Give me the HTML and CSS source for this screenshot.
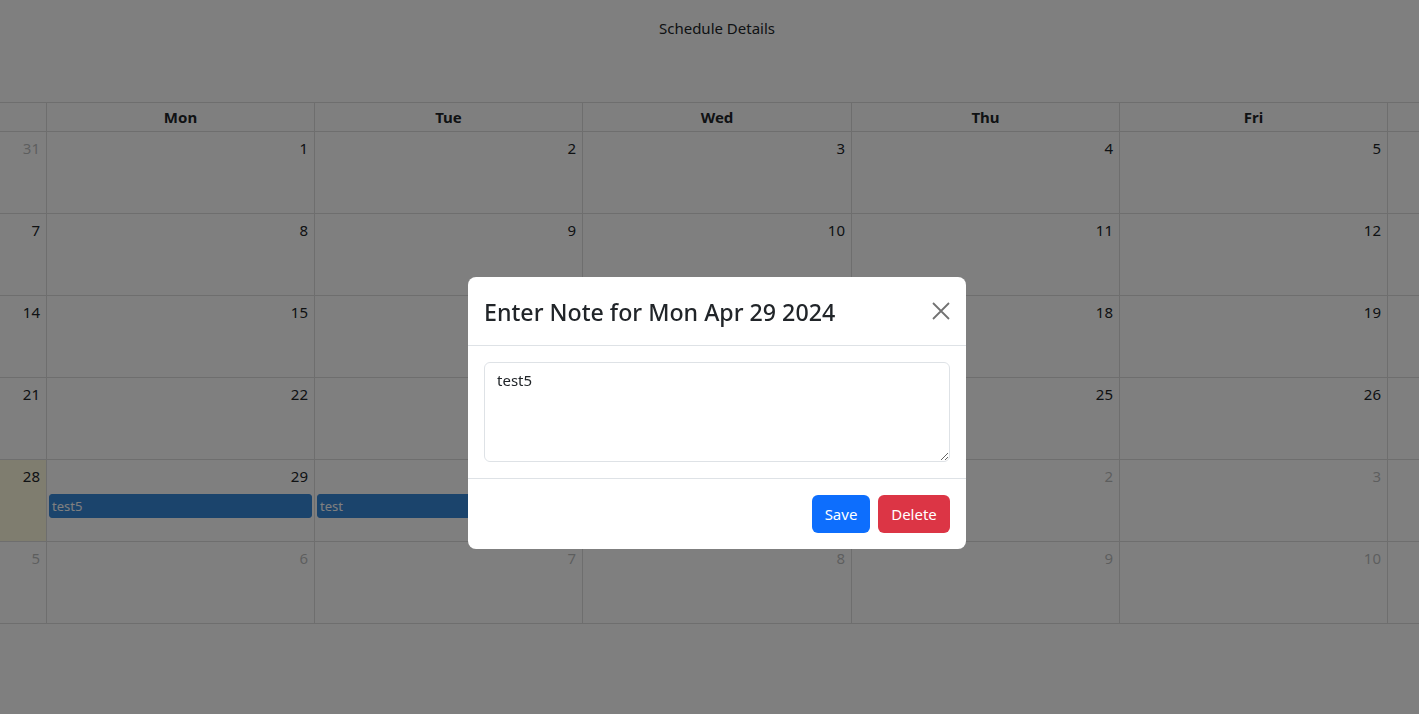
FILE: index.html
```html
<!DOCTYPE html>
<html lang="en">
<head>
<meta charset="utf-8">
<title>Schedule Details</title>
<link rel="stylesheet" href="styles.css">
</head>
<body>
<div class="page">
  <h1 class="page-title">Schedule Details</h1>
  <div class="cal">
    <div class="cal-head">
      <div class="hcell">Sun</div><div class="hcell">Mon</div><div class="hcell">Tue</div><div class="hcell">Wed</div><div class="hcell">Thu</div><div class="hcell">Fri</div><div class="hcell">Sat</div>
    </div>
    <div class="cal-body">
      <div class="day other"><div class="num">31</div></div>
      <div class="day"><div class="num">1</div></div>
      <div class="day"><div class="num">2</div></div>
      <div class="day"><div class="num">3</div></div>
      <div class="day"><div class="num">4</div></div>
      <div class="day"><div class="num">5</div></div>
      <div class="day"><div class="num">6</div></div>

      <div class="day"><div class="num">7</div></div>
      <div class="day"><div class="num">8</div></div>
      <div class="day"><div class="num">9</div></div>
      <div class="day"><div class="num">10</div></div>
      <div class="day"><div class="num">11</div></div>
      <div class="day"><div class="num">12</div></div>
      <div class="day"><div class="num">13</div></div>

      <div class="day"><div class="num">14</div></div>
      <div class="day"><div class="num">15</div></div>
      <div class="day"><div class="num">16</div></div>
      <div class="day"><div class="num">17</div></div>
      <div class="day"><div class="num">18</div></div>
      <div class="day"><div class="num">19</div></div>
      <div class="day"><div class="num">20</div></div>

      <div class="day"><div class="num">21</div></div>
      <div class="day"><div class="num">22</div></div>
      <div class="day"><div class="num">23</div></div>
      <div class="day"><div class="num">24</div></div>
      <div class="day"><div class="num">25</div></div>
      <div class="day"><div class="num">26</div></div>
      <div class="day"><div class="num">27</div></div>

      <div class="day today"><div class="num">28</div></div>
      <div class="day"><div class="num">29</div><div class="event">test5</div></div>
      <div class="day"><div class="num">30</div><div class="event">test</div></div>
      <div class="day other"><div class="num">1</div></div>
      <div class="day other"><div class="num">2</div></div>
      <div class="day other"><div class="num">3</div></div>
      <div class="day other"><div class="num">4</div></div>

      <div class="day other"><div class="num">5</div></div>
      <div class="day other"><div class="num">6</div></div>
      <div class="day other"><div class="num">7</div></div>
      <div class="day other"><div class="num">8</div></div>
      <div class="day other"><div class="num">9</div></div>
      <div class="day other"><div class="num">10</div></div>
      <div class="day other"><div class="num">11</div></div>
    </div>
  </div>
</div>

<div class="backdrop"></div>
<div class="modal-wrap">
  <div class="modal">
    <div class="modal-header">
      <h4 class="modal-title">Enter Note for Mon Apr 29 2024</h4>
      <button class="btn-close" type="button" aria-label="Close">
        <svg width="18" height="18" viewBox="0 0 18 18"><path d="M1 1L17 17M17 1L1 17" stroke="#000" stroke-width="1.8" fill="none"/></svg>
      </button>
    </div>
    <div class="modal-body">
      <textarea class="note">test5</textarea>
    </div>
    <div class="modal-footer">
      <button class="btn btn-primary" type="button">Save</button>
      <button class="btn btn-danger" type="button">Delete</button>
    </div>
  </div>
</div>
</body>
</html>
```

FILE: styles.css
```css
html, body {
  margin: 0;
  padding: 0;
  overflow: hidden;
  background: #fff;
}
body {
  font-family: "Noto Sans", "Open Sans", sans-serif;
  color: #212529;
  font-size: 16px;
}
.page {
  width: 1434px;
}
.page-title {
  margin: 0;
  height: 102px;
  box-sizing: border-box;
  padding-top: 16px;
  font-size: 15px;
  font-weight: 400;
  line-height: 24px;
  text-align: center;
}
.cal {
  width: 1878px;
  margin-left: -222px;
  border-top: 1px solid #ddd;
  border-left: 1px solid #ddd;
}
.cal-head,
.cal-body {
  display: grid;
  grid-template-columns: 268px 268px 268px 269px 268px 268px 268px;
}
.hcell {
  height: 28px;
  line-height: 28px;
  text-align: center;
  font-weight: 700;
  font-size: 15px;
  border-right: 1px solid #ddd;
  border-bottom: 1px solid #ddd;
}
.day {
  height: 81px;
  border-right: 1px solid #ddd;
  border-bottom: 1px solid #ddd;
  min-width: 0;
}
.day.today {
  background: rgba(255, 220, 40, 0.15);
}
.num {
  padding: 4px 6px 0 4px;
  height: 24px;
  line-height: 24px;
  text-align: right;
  font-size: 15px;
}
.other .num {
  opacity: 0.3;
}
.event {
  margin: 6px 2px 0 2px;
  height: 22px;
  line-height: 22px;
  background: #3788d8;
  border: 1px solid #3788d8;
  border-radius: 3px;
  color: #fff;
  font-size: 13px;
  padding-left: 2px;
}
.backdrop {
  position: fixed;
  inset: 0;
  background: rgba(0, 0, 0, 0.5);
}
.modal-wrap {
  position: fixed;
  top: 0;
  left: 0;
  width: 1434px;
  height: 100%;
  display: flex;
  justify-content: center;
  align-items: flex-start;
  padding-top: 277px;
  box-sizing: border-box;
}
.modal {
  width: 498px;
  background: #fff;
  border-radius: 8px;
  overflow: hidden;
}
.modal-header {
  height: 69px;
  box-sizing: border-box;
  padding: 0 16px;
  display: flex;
  align-items: center;
  justify-content: space-between;
  border-bottom: 1px solid #dee2e6;
}
.modal-title {
  margin: 4px 0 0 0;
  font-size: 23.2px;
  font-weight: 500;
  line-height: 1.2;
  color: #212529;
}
.btn-close {
  border: 0;
  background: none;
  padding: 0;
  width: 18px;
  height: 18px;
  opacity: 0.55;
  display: flex;
}
.modal-body {
  padding: 16px;
}
.note {
  display: block;
  width: 100%;
  height: 100px;
  box-sizing: border-box;
  padding: 6px 12px;
  border: 1px solid #dee2e6;
  border-radius: 6px;
  font-family: "Noto Sans", "Open Sans", sans-serif;
  font-size: 15px;
  line-height: 1.5;
  color: #212529;
  resize: vertical;
  margin: 0;
}
.modal-footer {
  border-top: 1px solid #dee2e6;
  padding: 16px;
  display: flex;
  justify-content: flex-end;
  gap: 8px;
}
.btn {
  height: 38px;
  border: 0;
  border-radius: 6px;
  padding: 0 12px;
  font-family: "Noto Sans", "Open Sans", sans-serif;
  font-size: 15px;
  color: #fff;
  line-height: 38px;
}
.btn-primary {
  background: #0d6efd;
  width: 58px;
}
.btn-danger {
  background: #dc3545;
  width: 72px;
}
```
